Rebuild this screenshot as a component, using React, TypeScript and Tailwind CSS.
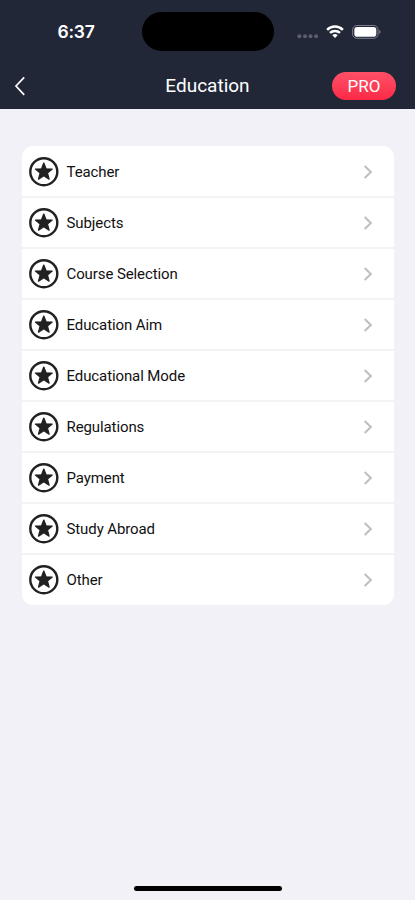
const categories = [
  'Teacher',
  'Subjects',
  'Course Selection',
  'Education Aim',
  'Educational Mode',
  'Regulations',
  'Payment',
  'Study Abroad',
  'Other',
];

function StarBadge() {
  return (
    <svg className="size-[30px] shrink-0" viewBox="0 0 30 30">
      <circle cx="14.8" cy="14.7" r="13.5" fill="none" stroke="#202122" strokeWidth="2.4" />
      <path
        d="M14.8 6.1l2.2 5.7 6.2.3-4.8 3.9 1.7 6.1-5.3-3.5-5.3 3.5 1.7-6.1-4.8-3.9 6.2-.3z"
        fill="#202122"
        stroke="#202122"
        strokeWidth="1.3"
        strokeLinejoin="round"
      />
    </svg>
  );
}

function StatusBar() {
  return (
    <div className="grid h-[63px] grid-cols-[141.5px_132px_1fr] items-center text-white">
      <div className="pt-px pl-[10.5px] text-center font-['Inter','Roboto',sans-serif] text-[17.5px] font-semibold tracking-[-0.2px]">
        6:37
      </div>
      <div className="h-[39px] rounded-full bg-black" />
      <div className="flex items-center pl-[23.5px]">
        <svg className="h-4 w-[22px]" viewBox="0 0 22 16" fill="#5b5e6c">
          <circle cx="2.4" cy="12.3" r="2" />
          <circle cx="8" cy="12.3" r="2" />
          <circle cx="13.5" cy="12.3" r="2" />
          <circle cx="19.1" cy="12.3" r="2" />
        </svg>
        <svg className="ml-[6.5px] h-[14px] w-[18px]" viewBox="0 0 18 14" fill="none" stroke="#fff" strokeWidth="2.5">
          <path d="M1.1 4.8a11.3 11.3 0 0 1 15.8 0" />
          <path d="M4 7.9a7.2 7.2 0 0 1 10 0" />
          <path d="M9 13l-2.7-2.7a3.9 3.9 0 0 1 5.4 0z" fill="#fff" stroke="none" />
        </svg>
        <svg className="ml-2 h-[14px] w-[30px]" viewBox="0 0 30 14">
          <rect x="0.6" y="0.5" width="25.4" height="12.8" rx="4.2" fill="none" stroke="#7c7f8b" strokeWidth="1" />
          <rect x="2.3" y="2.1" width="22" height="9.6" rx="2.8" fill="#fff" />
          <path d="M27.3 4.7c1.6.7 1.6 3.7 0 4.4z" fill="#858894" />
        </svg>
      </div>
    </div>
  );
}

function NavBar() {
  return (
    <div className="grid h-[46px] grid-cols-[1fr_auto_1fr] items-center pr-[19px] pl-[14px] text-white">
      <svg className="h-5 w-3" viewBox="0 0 12 20" fill="none" stroke="#fff" strokeWidth="1.7">
        <path d="M10.2 1.3L2 10l8.2 8.8" />
      </svg>
      <h1 className="pl-[5px] text-[19px] leading-6 font-normal">Education</h1>
      <div className="flex h-7 w-[64px] items-center justify-center justify-self-end rounded-full bg-linear-to-b from-[#ff4f68] to-[#fb2744] pt-px text-[17px]">
        PRO
      </div>
    </div>
  );
}

export default function App() {
  return (
    <div className="flex h-[900px] w-[415px] flex-col bg-[#f2f1f8] font-['Roboto',sans-serif]">
      <header className="shrink-0 bg-[#222738]">
        <StatusBar />
        <NavBar />
      </header>
      <ul className="mx-[21.5px] mt-[37px] overflow-hidden rounded-[11px] bg-white">
        {categories.map((name) => (
          <li
            key={name}
            className="flex h-[51px] items-center border-b-2 border-[#f3f2f5] pr-[21px] pl-[7px] first:h-[52px] first:pt-px last:h-[50px] last:border-b-0 last:pb-px"
          >
            <StarBadge />
            <span className="ml-2 flex-1 pt-px text-[15px] leading-5 tracking-[-0.1px] text-[#111]">{name}</span>
            <svg className="h-[14px] w-[10px]" viewBox="0 0 10 14" fill="none" stroke="#bfbfc1" strokeWidth="2.1">
              <path d="M1.7 1.1L7.8 7l-6.1 5.9" />
            </svg>
          </li>
        ))}
      </ul>
      <div className="mt-auto mb-[9px] h-[5px] w-[148px] self-center rounded-full bg-black" />
    </div>
  );
}
